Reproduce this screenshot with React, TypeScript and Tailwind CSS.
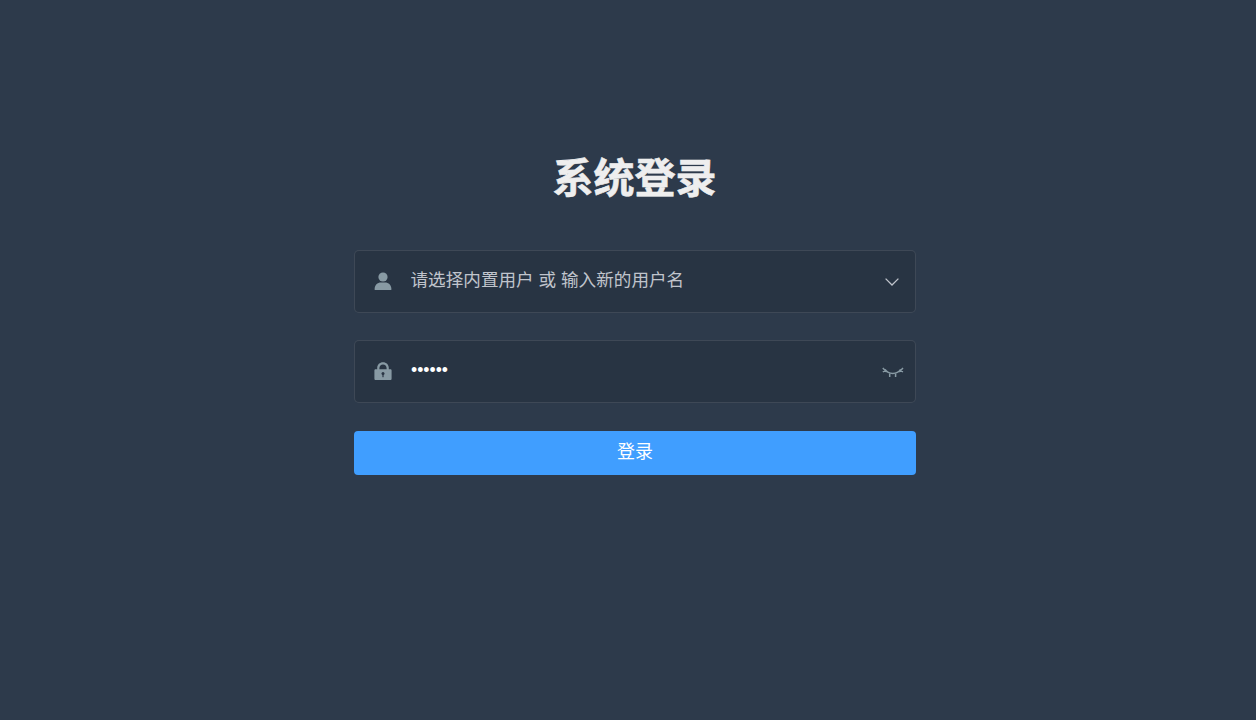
import React from 'react';

const fontStack = { fontFamily: '"Liberation Sans", "Noto Sans CJK SC", sans-serif' };

const UserIcon = () => (
  <svg viewBox="0 0 18 18" className="w-[18px] h-[18px] fill-[#889aa4]">
    <circle cx="9" cy="5" r="4.6" />
    <path d="M0.6 17.4 C0.6 17.9 1 18 1.6 18 H16.4 C17 18 17.4 17.9 17.4 17.4 C17.4 13.2 14.6 10.6 11 10.6 H7 C3.4 10.6 0.6 13.2 0.6 17.4 Z" />
  </svg>
);

const LockIcon = () => (
  <svg viewBox="0 0 18 18" className="w-[18px] h-[18px]">
    <path
      fillRule="evenodd"
      className="fill-[#889aa4]"
      d="M3.2 7.2 V6 C3.2 2.6 5.7 0.2 9 0.2 C12.3 0.2 14.8 2.6 14.8 6 V7.2 H16.2 C17.2 7.2 17.6 7.7 17.6 8.6 V16.4 C17.6 17.4 17.1 18 16.2 18 H1.8 C0.9 18 0.4 17.4 0.4 16.4 V8.6 C0.4 7.7 0.8 7.2 1.8 7.2 Z M5.4 7.2 H12.6 V6 C12.6 3.9 11.1 2.4 9 2.4 C6.9 2.4 5.4 3.9 5.4 6 Z"
    />
    <circle cx="9" cy="11.6" r="1.5" className="fill-[#2a3544]" />
    <rect x="8.4" y="12" width="1.2" height="3.2" className="fill-[#2a3544]" />
  </svg>
);

const Chevron = () => (
  <svg viewBox="0 0 14 8" fill="none" className="w-[14px] h-[8px] stroke-[#c0c4cc]" strokeWidth="1.3">
    <path d="M0.6 0.6 L7 7 L13.4 0.6" />
  </svg>
);

const EyeClosedIcon = () => (
  <svg viewBox="0 0 22 12" fill="none" className="w-[22px] h-[12px] stroke-[#889aa4]" strokeWidth="1.5">
    <path d="M3 3.4 C6.5 8.8 15 8.8 18.6 3.4" />
    <path d="M0.8 2 L4.6 6 M0.8 5.8 L4 4.4 M21 2 L17.2 6 M21 5.8 L17.8 4.4 M7.7 7.4 V11 M13.6 7.4 V11" />
  </svg>
);

const App: React.FC = () => {
  return (
    <div className="min-h-[720px] bg-[#2d3a4b] pl-[354px] pt-[155px]" style={fontStack}>
      <div className="w-[562px]">
        <h3 className="text-[41px] leading-[48px] font-bold text-[#eeeeee] text-center mb-[47px] pr-[1px] [-webkit-text-stroke:0.6px_#eeeeee]">系统登录</h3>

        <div className="h-[63px] flex items-center rounded-[5px] border border-white/10 bg-black/10 pl-[18.5px] pr-[16px] mb-[27px]">
          <div className="-mt-[2px]">
            <UserIcon />
          </div>
          <span className="ml-[19px] flex-1 text-[17.6px] text-[#c0c4cc] -mt-[3px]">请选择内置用户 或 输入新的用户名</span>
          <Chevron />
        </div>

        <div className="h-[63px] flex items-center rounded-[5px] border border-white/10 bg-black/10 pl-[18.5px] pr-[11px] mb-[28px]">
          <div className="-mt-[2px]">
            <LockIcon />
          </div>
          <input
            type="password"
            readOnly
            value="123456"
            className="ml-[19.5px] flex-1 min-w-0 bg-transparent outline-none text-[17.6px] text-white -mt-[3px]"
          />
          <EyeClosedIcon />
        </div>

        <button className="w-full h-[44px] pb-[2px] rounded-[4px] bg-[#409eff] text-white text-[18px]">登录</button>
      </div>
    </div>
  );
};

export default App;
